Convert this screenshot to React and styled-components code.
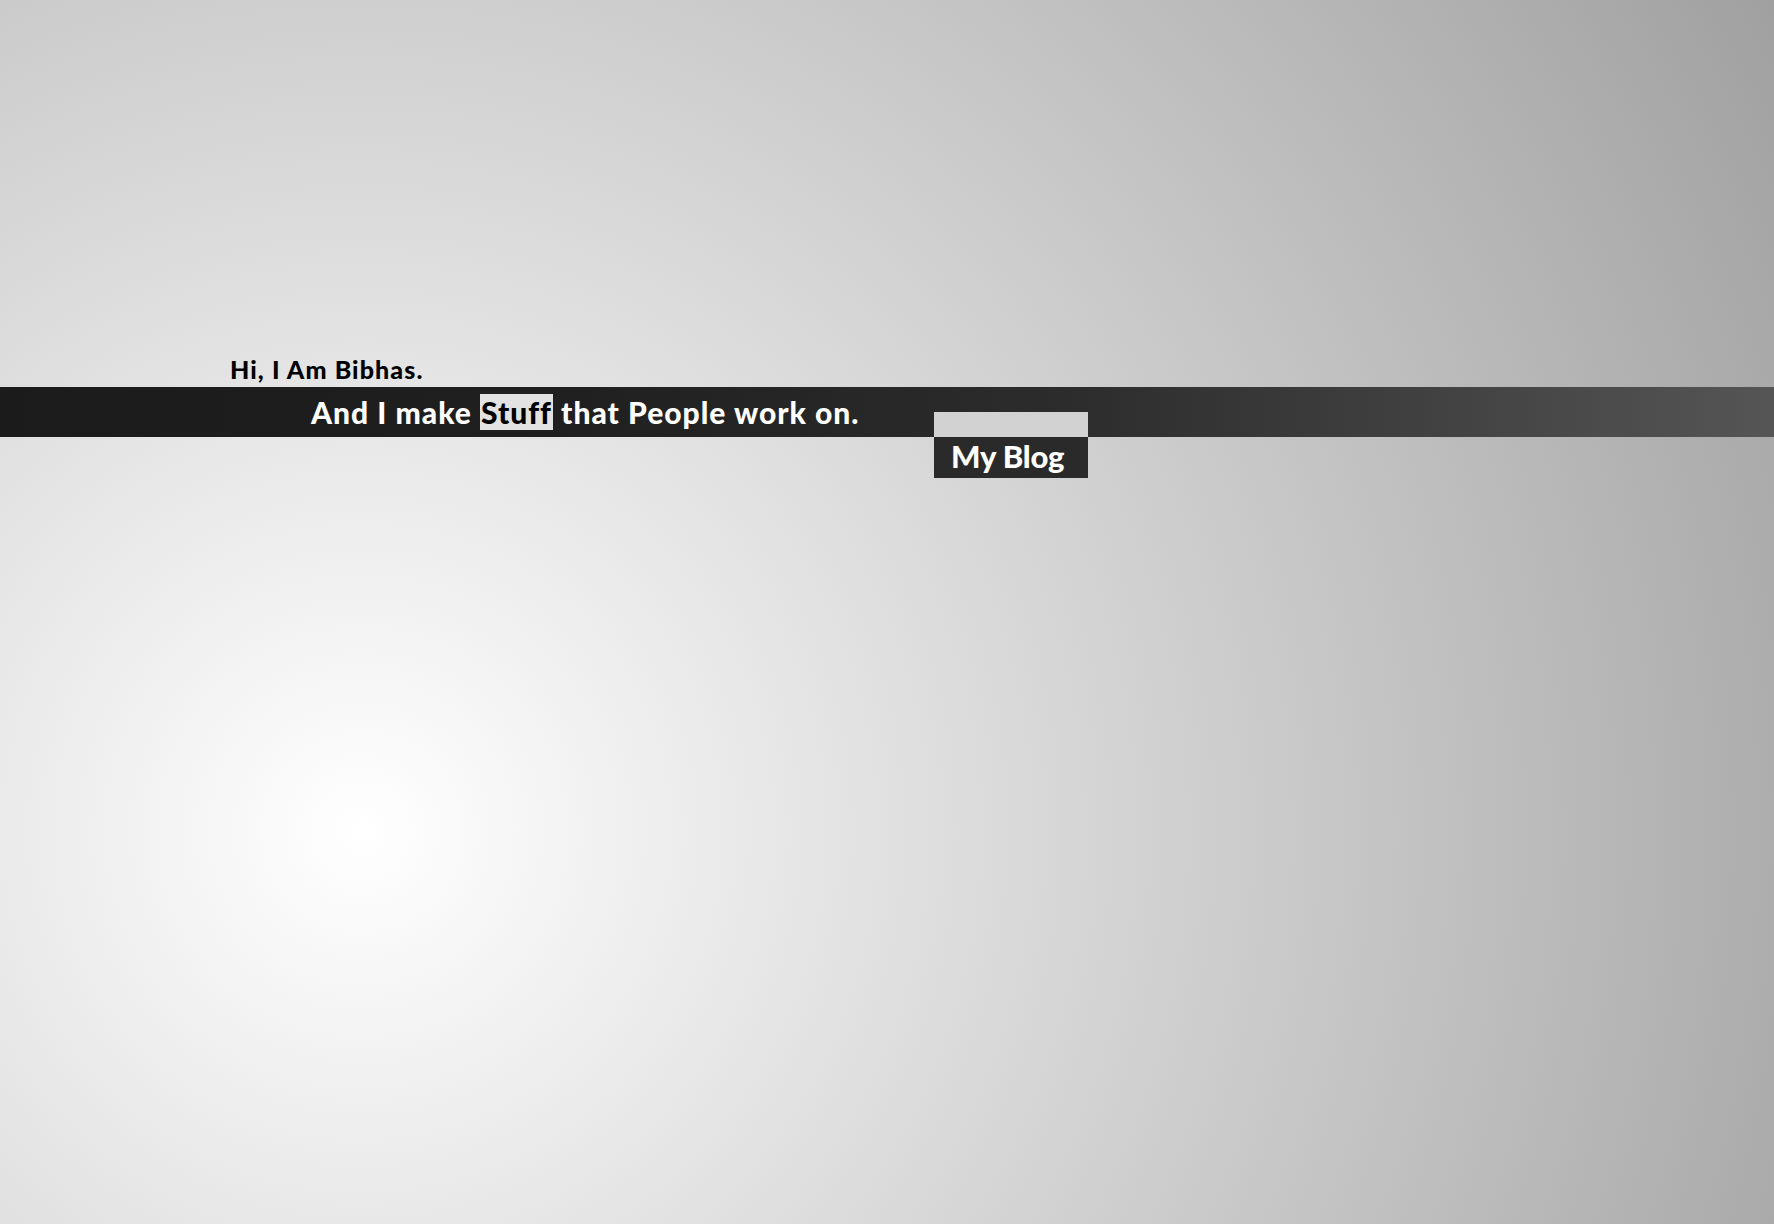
import React from "react";
import styled, { createGlobalStyle } from "styled-components";

const Global = createGlobalStyle`
  html, body {
    margin: 0;
    padding: 0;
    height: 100%;
  }
  body {
    min-height: 1224px;
    background: radial-gradient(circle at 362px 831px, #ffffff 0px, #a0a0a0 1640px);
    font-family: Lato, "Open Sans", "DejaVu Sans", sans-serif;
    overflow: hidden;
  }
`;

const Page = styled.div`
  padding-top: 352px;
  display: flex;
  flex-direction: column;
`;

const Greeting = styled.h1`
  margin: 0 0 0 230px;
  font-size: 25px;
  line-height: 35px;
  font-weight: 900;
  color: #000;
  letter-spacing: 1.1px;
`;

const Bar = styled.header`
  height: 50px;
  display: flex;
  align-items: flex-start;
  background: linear-gradient(90deg, #1b1b1b 0%, #1f1f1f 30%, #2c2c2c 60%, #555555 100%);
`;

const Tagline = styled.h2`
  margin: 0;
  box-sizing: border-box;
  width: 934px;
  padding-left: 311px;
  font-size: 30px;
  line-height: 50px;
  font-weight: 900;
  color: #fff;
  white-space: nowrap;
  letter-spacing: 1px;
`;

const Highlight = styled.span`
  background: #e2e2e2;
  color: #000;
  padding: 0 1px;
`;

const Nav = styled.nav`
  margin-top: 25px;
  width: 154px;
  display: flex;
  flex-direction: column;
`;

const NavCap = styled.div`
  height: 25px;
  background: #d2d2d2;
`;

const NavLink = styled.a`
  display: block;
  height: 41px;
  background: #2a2a2a;
  color: #fff;
  text-decoration: none;
  font-size: 31px;
  font-weight: 900;
  line-height: 38px;
  padding-left: 17px;
  letter-spacing: -0.2px;
`;

export default function App() {
  return (
    <>
      <Global />
      <Page>
        <Greeting>Hi, I Am Bibhas.</Greeting>
        <Bar>
          <Tagline>
            And I make <Highlight>Stuff</Highlight> that People work on.
          </Tagline>
          <Nav>
            <NavCap />
            <NavLink href="#">My Blog</NavLink>
          </Nav>
        </Bar>
      </Page>
    </>
  );
}
